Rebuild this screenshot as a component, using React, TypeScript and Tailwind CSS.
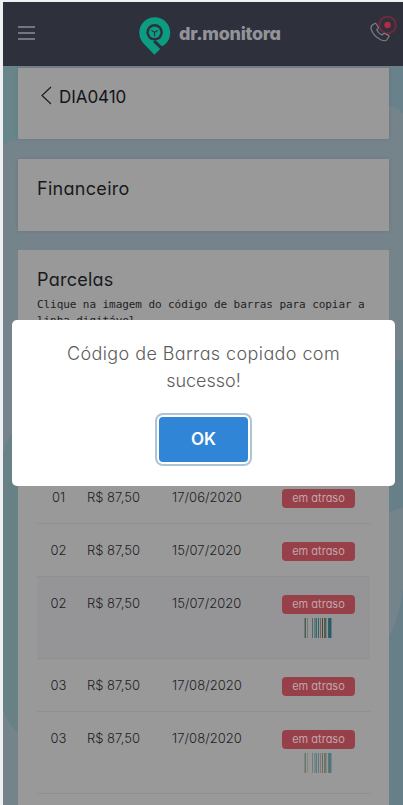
import React from 'react'

const parcelas = [
  { numero: '01', valor: 'R$ 87,50', data: '17/06/2020', barcode: false, active: false },
  { numero: '02', valor: 'R$ 87,50', data: '15/07/2020', barcode: false, active: false },
  { numero: '02', valor: 'R$ 87,50', data: '15/07/2020', barcode: true, active: true },
  { numero: '03', valor: 'R$ 87,50', data: '17/08/2020', barcode: false, active: false },
  { numero: '03', valor: 'R$ 87,50', data: '17/08/2020', barcode: true, active: false },
]

const bars = [
  [0, 1, '#6b7d76'],
  [1, 1, '#4b5c58'],
  [3, 1, '#6d7f78'],
  [5, 1, '#a88f87'],
  [8, 1, '#39756f'],
  [10, 2, '#667a80'],
  [12, 1, '#4a6468'],
  [14, 1, '#24696e'],
  [16, 1, '#7b5f58'],
  [18, 1, '#3b4b49'],
  [20, 2, '#54604a'],
  [22, 1, '#72807a'],
  [24, 1, '#1f6a70'],
  [25, 2, '#35575f'],
  [27, 1, '#5a7f86'],
] as const

function Barcode({ faded }: { faded: boolean }) {
  return (
    <svg className={faded ? 'mt-1 mr-px opacity-60' : 'mt-1 mr-px'} width="28" height="20" shapeRendering="crispEdges">
      {bars.map(([x, w, fill]) => (
        <rect key={x} x={x} y="0" width={w} height="20" fill={fill} />
      ))}
    </svg>
  )
}

function Logo() {
  return (
    <div className="flex items-center">
      <svg width="32" height="38" viewBox="0 0 32 38">
        <path
          d="M15.7 0.3C7.2 0.3 0.3 7.1 0.3 15.6c0 4.5 1.7 8.3 4.7 11.3l10.4 10.8 5.8-5.6-7.2-7 2.3-2.2 6.6 6.3C28.3 27 31.2 21.7 31.2 15.6 31.2 7.1 24.3 0.3 15.7 0.3z"
          fill="#0c9c82"
        />
        <circle cx="15.6" cy="15.3" r="8.3" fill="#2e303c" />
        <circle cx="15.6" cy="15.3" r="5.8" fill="#0c9c82" />
        <path d="M12.4 13.4l3.2 1.900 3.200-1.900M15.600 15.300v3.900" fill="none" stroke="#2e303c" strokeWidth="1.100" />
      </svg>
      <span className="-mt-[3px] ml-[8px] text-[18px] font-extrabold leading-none tracking-[-0.3px] text-[#939499]">dr.monitora</span>
    </div>
  )
}

function Header() {
  return (
    <header className="relative flex h-16 items-center bg-[#2e303c] pl-[15px] pr-[6px]">
      <div className="-mt-[2px] flex w-[17px] flex-col gap-1">
        <span className="h-[2px] bg-[#74767d]" />
        <span className="h-[2px] bg-[#74767d]" />
        <span className="h-[2px] bg-[#74767d]" />
      </div>
      <div className="ml-[104px] mt-[3px]">
        <Logo />
      </div>
      <svg className="-mt-[11px] ml-auto" width="28" height="32" viewBox="0 0 28 32">
        <circle cx="18.5" cy="12" r="8.3" fill="none" stroke="#6a2b3b" strokeWidth="2.200" />
        <path
          d="M3 12.2l2.7-1.7c.6-.3 1.1-.1 1.4.3l2.2 3.5c.3.5.1 1-.3 1.4l-1.3.9c.8 2 3.3 4.500 5.500 5.400l1.200-1.300c.4-.4.9-.5 1.400-.2l3.700 1.900c.6.3.6.9.3 1.400l-1.700 2.700c-1.200 1.600-3.700 1.500-6.400.2C7.500 24.500 3.800 20.600 2.500 17.200c-.7-2-.8-3.800.5-5z"
          fill="none"
          stroke="#7d7e86"
          strokeWidth="1.200"
        />
        <circle cx="18.5" cy="12" r="3.200" fill="#b02c45" />
      </svg>
    </header>
  )
}

function Background() {
  return (
    <svg className="absolute inset-0" width="400" height="803" viewBox="3 2 400 803">
      <rect x="3" y="2" width="400" height="803" fill="#75838b" />
      <path d="M3 66h16v73L3 144z" fill="#68858a" />
      <path d="M3 454q3-16 16-28v308q-10-9-16-24z" fill="#688184" />
      <path d="M388 66h15v47q-8-6-15-8z" fill="#69818b" />
      <path d="M388 360h15v445h-15z" fill="#677f88" />
      <path d="M388 513q7-4 15-5v82q-4 30-15 48z" fill="#75838b" />
    </svg>
  )
}

export default function App() {
  return (
    <div className="relative h-[805px] w-[403px] overflow-hidden bg-[#eff0f1] pl-[3px] pt-[2px] font-[Inter,sans-serif] [font-feature-settings:'cv11']">
      <div className="relative h-[803px] overflow-hidden">
        <Background />
        <Header />
        <main className="relative mt-[2px] flex flex-col pl-[15px] pr-[14px]">
          <section className="flex h-[71px] items-start bg-[#999] pl-[23px] pt-[18px] shadow-[0_0_3px_rgba(60,70,80,0.15)]">
            <svg width="11" height="20" viewBox="0 0 11 20">
              <path d="M10 1L1 9.500 10 18" fill="none" stroke="#18191c" strokeWidth="1.100" />
            </svg>
            <h1 className="ml-[7px] text-[17px] leading-[23px] tracking-[-0.05px] text-[#131418]">DIA0410</h1>
          </section>

          <section className="mt-5 h-[72px] bg-[#999] pl-[19px] pt-[18px] shadow-[0_0_3px_rgba(60,70,80,0.15)]">
            <h2 className="text-[18px] leading-6 tracking-[0.3px] text-[#18191c]">Financeiro</h2>
          </section>

          <section className="mt-[19px] h-[600px] bg-[#999] px-[19px] pt-[18px]">
            <h2 className="text-[18px] leading-6 tracking-[0.25px] text-[#18191c]">Parcelas</h2>
            <p className="mt-[5px] h-[174px] whitespace-nowrap font-['DejaVu_Sans_Mono',monospace] text-[11px] leading-4 tracking-[-0.07px] text-[#212226]">
              Clique na imagem do código de barras para copiar a<br />
              linha digitável
            </p>
            <div className="text-[13px] font-light text-[#202126]">
              {parcelas.map((parcela, i) => (
                <div
                  key={i}
                  className={`flex items-start border-b border-[#8f8f92] pt-[18px] ${parcela.barcode ? 'h-[82px]' : 'h-[53px]'} ${parcela.active ? 'bg-[#959597]' : ''}`}
                >
                  <span className="-mt-[2px] w-[43px] text-center leading-5">{parcela.numero}</span>
                  <span className="-mt-[2px] ml-[7px] w-[78px] leading-5">{parcela.valor}</span>
                  <span className="-mt-[2px] ml-[7px] w-[110px] leading-5 tracking-[0.05px]">{parcela.data}</span>
                  <div className="flex w-[73px] flex-col items-center">
                    <span className="h-[19px] w-full rounded-[4px] bg-[#974049] text-center text-[11px] font-normal leading-[18px] text-[#c4a5a9]">
                      em atraso
                    </span>
                    {parcela.barcode && <Barcode faded={!parcela.active} />}
                  </div>
                </div>
              ))}
            </div>
          </section>
        </main>
      </div>

      {/* modal */}
      <div className="absolute left-[12px] top-[320px] flex h-[166px] w-[383px] flex-col items-center rounded-[5px] bg-white pt-5">
        <p className="text-center text-[18px] font-light leading-[27px] tracking-[0.4px] text-[#5c5c5c]">
          Código de Barras copiado com
          <br />
          <span className="tracking-normal">sucesso!</span>
        </p>
        <button className="mt-[23px] h-[45px] w-[89px] rounded-[4px] bg-[#3085d6] pt-px text-[17px] font-semibold text-white shadow-[0_0_0_2px_#fff,0_0_0_4px_#adc4d5]">
          OK
        </button>
      </div>
    </div>
  )
}
